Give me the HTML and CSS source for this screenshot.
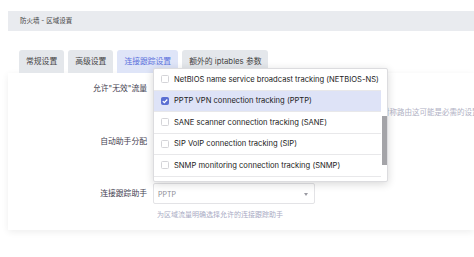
FILE: index.html
```html
<!DOCTYPE html>
<html>
<head>
  <meta charset="utf-8">
  <title>防火墙 - 区域设置</title>
  <link rel="stylesheet" href="styles.css">
</head>
<body>
  <div class="crumb">防火墙 - 区域设置</div>

  <div class="tabs">
    <div class="tab">常规设置</div>
    <div class="tab">高级设置</div>
    <div class="tab active">连接跟踪设置</div>
    <div class="tab">额外的 iptables 参数</div>
  </div>

  <div class="panel">
    <div class="row row-invalid">
      <div class="label">允许"无效"流量</div>
      <div class="field">
        <span class="cbx"></span>
        <div class="desc">启用此项后不会安装额外的规则以拒绝无效状态的转发流量，对于非对称路由这可能是必需的设置。</div>
      </div>
    </div>

    <div class="row row-auto">
      <div class="label">自动助手分配</div>
      <div class="field"><span class="cbx"></span></div>
    </div>

    <div class="row row-helper">
      <div class="label">连接跟踪助手</div>
      <div class="field">
        <div class="select-wrap">
          <div class="select">PPTP<span class="arrow"></span></div>
          <div class="dropdown">
            <ul class="options">
              <li><span class="cbx"></span>NetBIOS name service broadcast tracking (NETBIOS-NS)</li>
              <li class="checked"><span class="cbx"><svg viewBox="0 0 8 8"><path d="M1.8 4.1 3.3 5.6 6.3 2.5" /></svg></span>PPTP VPN connection tracking (PPTP)</li>
              <li><span class="cbx"></span>SANE scanner connection tracking (SANE)</li>
              <li><span class="cbx"></span>SIP VoIP connection tracking (SIP)</li>
              <li><span class="cbx"></span>SNMP monitoring connection tracking (SNMP)</li>
              <li><span class="cbx"></span>TFTP connection tracking (TFTP)</li>
            </ul>
            <div class="thumb"></div>
          </div>
        </div>
        <div class="hint">为区域流量明确选择允许的连接跟踪助手</div>
      </div>
    </div>
  </div>
</body>
</html>
```

FILE: styles.css
```css
html, body {
  margin: 0;
  background: #fff;
}

body {
  width: 474px;
  height: 257px;
  overflow: hidden;
  font-family: Inter, "Noto Sans CJK SC", sans-serif;
  color: #333;
}

.crumb {
  margin: 11px 0 0 8px;
  height: 20px;
  line-height: 20px;
  padding-left: 12px;
  background: #e9ebef;
  font-size: 6.5px;
  color: #444;
}

.tabs {
  display: flex;
  gap: 4px;
  margin: 19px 0 0 19px;
}

.tab {
  height: 23px;
  line-height: 23px;
  padding: 0 7px;
  font-size: 7.8px;
  background: #e4e7eb;
  color: #444;
  border-radius: 3px 3px 0 0;
}

.tab.active {
  background: #dfe5f8;
  color: #5b70dc;
}

.panel {
  margin-left: 8px;
  height: 157px;
  box-sizing: border-box;
  padding: 10px 0;
  background: #fff;
  box-shadow: 0 2px 7px rgba(0, 0, 0, 0.07);
}

.row {
  display: grid;
  grid-template-columns: 139px 1fr;
  column-gap: 6px;
}

.label {
  text-align: right;
  font-size: 7.8px;
  line-height: 10px;
  color: #3f4050;
  white-space: nowrap;
}

.field {
  position: relative;
  min-width: 0;
}

.field > .cbx {
  display: block;
  margin-top: 1px;
}

.cbx {
  display: inline-block;
  width: 8px;
  height: 8px;
  box-sizing: border-box;
  border: 1px solid #d4d4d8;
  border-radius: 1.5px;
  background: #fff;
  flex: none;
}

.desc {
  margin-top: 16px;
  padding-left: 4px;
  font-size: 7.5px;
  line-height: 10px;
  color: #b0b1c4;
  white-space: nowrap;
}

.row-auto {
  margin-top: 18px;
}

.row-helper {
  margin-top: 37px;
}

.row-helper .label {
  line-height: 21px;
}

.select-wrap {
  position: relative;
  width: 162px;
}

.select {
  position: relative;
  height: 21px;
  line-height: 21px;
  box-sizing: border-box;
  border: 1px solid #e3e3e6;
  border-radius: 2px;
  padding-left: 4px;
  font-size: 7px;
  color: #8a8a94;
}

.arrow {
  position: absolute;
  right: 6px;
  top: 9px;
  border-left: 2.5px solid transparent;
  border-right: 2.5px solid transparent;
  border-top: 3px solid #9a9aa2;
}

.hint {
  margin-top: 6px;
  padding-left: 4px;
  font-size: 7px;
  line-height: 10px;
  color: #a9abc4;
}

.dropdown {
  position: absolute;
  left: 0;
  bottom: calc(100% + 1px);
  width: 235px;
  height: 114px;
  box-sizing: border-box;
  overflow: hidden;
  background: #fff;
  border: 1px solid #dcdcdf;
  border-radius: 2px;
  box-shadow: 0 2px 8px rgba(0, 0, 0, 0.16);
  z-index: 5;
}

.options {
  list-style: none;
  margin: 0 6px 0 0;
  padding: 0;
}

.options li {
  display: flex;
  align-items: center;
  gap: 5px;
  height: 21.5px;
  box-sizing: border-box;
  padding-left: 7px;
  border-bottom: 1px solid #e8e8ea;
  font-size: 7.6px;
  color: #222;
  white-space: nowrap;
}

.options li.checked {
  background: #dee3f7;
}

.options li.checked .cbx {
  border-color: #5b6fd2;
  background: #5b6fd2;
  position: relative;
}

.options .cbx svg {
  position: absolute;
  left: -1px;
  top: -1px;
  width: 8px;
  height: 8px;
  fill: none;
  stroke: #fff;
  stroke-width: 1.3;
}

.thumb {
  position: absolute;
  right: 0;
  top: 47px;
  width: 5px;
  height: 49px;
  background: #a4a4a8;
}
```
